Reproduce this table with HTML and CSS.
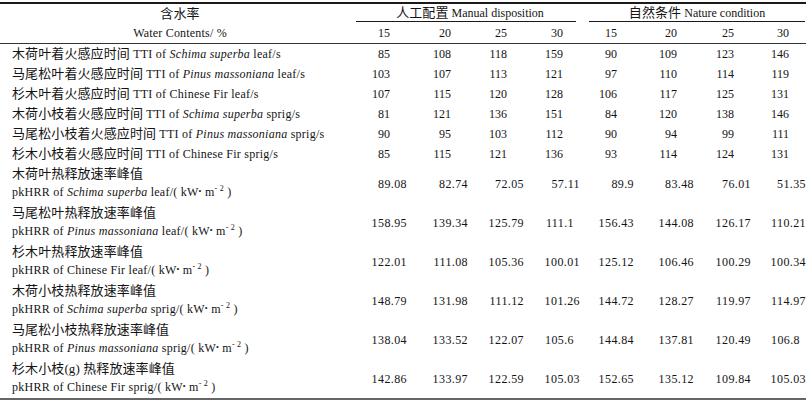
FILE: index.html
```html
<!DOCTYPE html>
<html lang="zh">
<head>
<meta charset="utf-8">
<title>含水率 table</title>
<link rel="stylesheet" href="styles.css">
</head>
<body>
<table class="data">
  <colgroup>
    <col class="c-label"><col class="c1"><col class="c2"><col class="c3"><col class="c4"><col class="c5"><col class="c6"><col class="c7"><col class="c8">
  </colgroup>
  <thead>
    <tr class="hr-a">
      <th class="lab-h"><span class="zh">含水率</span></th>
      <th colspan="4" class="grp"><div class="grp-line g1"><span class="zh">人工配置</span> Manual disposition</div></th>
      <th colspan="4" class="grp"><div class="grp-line g2"><span class="zh">自然条件</span> Nature condition</div></th>
    </tr>
    <tr class="hr-b">
      <th class="lab-h">Water Contents/ %</th>
      <th>15</th><th>20</th><th>25</th><th>30</th><th>15</th><th>20</th><th>25</th><th>30</th>
    </tr>
  </thead>
  <tbody>
    <tr class="ri">
      <td class="lab"><span class="zh">木荷叶着火感应时间</span> TTI of <i>Schima superba</i> leaf/s</td>
      <td>85</td><td>108</td><td>118</td><td>159</td><td>90</td><td>109</td><td>123</td><td>146</td>
    </tr>
    <tr class="ri">
      <td class="lab"><span class="zh">马尾松叶着火感应时间</span> TTI of <i>Pinus massoniana</i> leaf/s</td>
      <td>103</td><td>107</td><td>113</td><td>121</td><td>97</td><td>110</td><td>114</td><td>119</td>
    </tr>
    <tr class="ri">
      <td class="lab"><span class="zh">杉木叶着火感应时间</span> TTI of Chinese Fir leaf/s</td>
      <td>107</td><td>115</td><td>120</td><td>128</td><td>106</td><td>117</td><td>125</td><td>131</td>
    </tr>
    <tr class="ri">
      <td class="lab"><span class="zh">木荷小枝着火感应时间</span> TTI of <i>Schima superba</i> sprig/s</td>
      <td>81</td><td>121</td><td>136</td><td>151</td><td>84</td><td>120</td><td>138</td><td>146</td>
    </tr>
    <tr class="ri">
      <td class="lab"><span class="zh">马尾松小枝着火感应时间</span> TTI of <i>Pinus massoniana</i> sprig/s</td>
      <td>90</td><td>95</td><td>103</td><td>112</td><td>90</td><td>94</td><td>99</td><td>111</td>
    </tr>
    <tr class="ri">
      <td class="lab"><span class="zh">杉木小枝着火感应时间</span> TTI of Chinese Fir sprig/s</td>
      <td>85</td><td>115</td><td>121</td><td>136</td><td>93</td><td>114</td><td>124</td><td>131</td>
    </tr>
    <tr class="rd">
      <td class="lab"><div class="l1"><span class="zh">木荷叶热释放速率峰值</span></div><div class="l2">pkHRR of <i>Schima superba</i> leaf/( kW<span class="dot">•</span> m<sup>- 2</sup> )</div></td>
      <td>89.08</td><td>82.74</td><td>72.05</td><td>57.11</td><td>89.9</td><td>83.48</td><td>76.01</td><td>51.35</td>
    </tr>
    <tr class="rd">
      <td class="lab"><div class="l1"><span class="zh">马尾松叶热释放速率峰值</span></div><div class="l2">pkHRR of <i>Pinus massoniana</i> leaf/( kW<span class="dot">•</span> m<sup>- 2</sup> )</div></td>
      <td>158.95</td><td>139.34</td><td>125.79</td><td class="sh">111.1</td><td>156.43</td><td>144.08</td><td>126.17</td><td>110.21</td>
    </tr>
    <tr class="rd">
      <td class="lab"><div class="l1"><span class="zh">杉木叶热释放速率峰值</span></div><div class="l2">pkHRR of Chinese Fir leaf/( kW<span class="dot">•</span> m<sup>- 2</sup> )</div></td>
      <td>122.01</td><td>111.08</td><td>105.36</td><td>100.01</td><td>125.12</td><td>106.46</td><td>100.29</td><td>100.34</td>
    </tr>
    <tr class="rd">
      <td class="lab"><div class="l1"><span class="zh">木荷小枝热释放速率峰值</span></div><div class="l2">pkHRR of <i>Schima superba</i> sprig/( kW<span class="dot">•</span> m<sup>- 2</sup> )</div></td>
      <td>148.79</td><td>131.98</td><td>111.12</td><td>101.26</td><td>144.72</td><td>128.27</td><td>119.97</td><td>114.97</td>
    </tr>
    <tr class="rd">
      <td class="lab"><div class="l1"><span class="zh">马尾松小枝热释放速率峰值</span></div><div class="l2">pkHRR of <i>Pinus massoniana</i> sprig/( kW<span class="dot">•</span> m<sup>- 2</sup> )</div></td>
      <td>138.04</td><td>133.52</td><td>122.07</td><td class="sh">105.6</td><td>144.84</td><td>137.81</td><td>120.49</td><td class="sh">106.8</td>
    </tr>
    <tr class="rd">
      <td class="lab"><div class="l1"><span class="zh">杉木小枝(g) 热释放速率峰值</span></div><div class="l2">pkHRR of Chinese Fir sprig/( kW<span class="dot">•</span> m<sup>- 2</sup> )</div></td>
      <td>142.86</td><td>133.97</td><td>122.59</td><td>105.03</td><td>152.65</td><td>135.12</td><td>109.84</td><td>105.03</td>
    </tr>
  </tbody>
</table>
</body>
</html>
```
FILE: styles.css
```css
html, body {
  margin: 0;
  padding: 0;
  background: #fff;
}
body {
  font-family: "Liberation Serif", "Noto Sans CJK SC", serif;
  font-size: 12px;
  color: #141414;
}
.data {
  margin-top: 2px;
  width: 806px;
  table-layout: fixed;
  border-collapse: separate;
  border-spacing: 0;
  border-top: 2px solid #1a1a1a;
  border-bottom: 2px solid #666;
}
.c-label { width: 360px; }
.c1 { width: 47px; }
.c2 { width: 61px; }
.c3 { width: 56px; }
.c4 { width: 56px; }
.c5 { width: 54px; }
.c6 { width: 60px; }
.c7 { width: 57px; }
.c8 { width: 55px; }

th, td {
  padding: 0;
  font-weight: normal;
  white-space: nowrap;
}
.zh {
  font-family: "Liberation Serif", "Noto Sans CJK SC", serif;
  font-size: 13px;
  letter-spacing: 0.1px;
}
.hr-a th {
  line-height: 17px;
  height: 18px;
  vertical-align: top;
}
.hr-a .lab-h {
  line-height: 19px;
}
.lab-h {
  text-align: center;
  letter-spacing: 0.2px;
}
.grp {
  text-align: center;
}
.grp-line {
  border-bottom: 1px solid #1a1a1a;
  height: 17px;
}
.g1 {
  margin: 0 4px 0 -4px;
  padding-left: 8px;
}
.g2 {
  margin: 0 1px 0 9px;
}
.hr-b th {
  line-height: 19px;
  height: 19px;
  border-bottom: 1px solid #333;
  text-align: right;
  padding-right: 17px;
}
.hr-b .lab-h {
  text-align: center;
  padding-right: 0;
}
.ri td {
  height: 20px;
  line-height: 20px;
  text-align: right;
  padding-right: 17px;
}
.rd td {
  height: 38px;
  text-align: right;
  vertical-align: middle;
  letter-spacing: 0.4px;
  padding-top: 1px;
}
td.lab {
  text-align: left;
  padding-left: 12px;
  padding-right: 0;
  letter-spacing: 0.25px;
}
.rd td.lab {
  vertical-align: top;
  padding-top: 1px;
  letter-spacing: 0.25px;
}
.l1, .l2 {
  line-height: 18px;
  height: 18px;
}
.rd td.sh {
  padding-right: 6px;
}
.dot {
  font-size: 8px;
  vertical-align: 2px;
  line-height: 0;
}
sup {
  font-size: 8px;
  line-height: 0;
  vertical-align: 5px;
}
```
